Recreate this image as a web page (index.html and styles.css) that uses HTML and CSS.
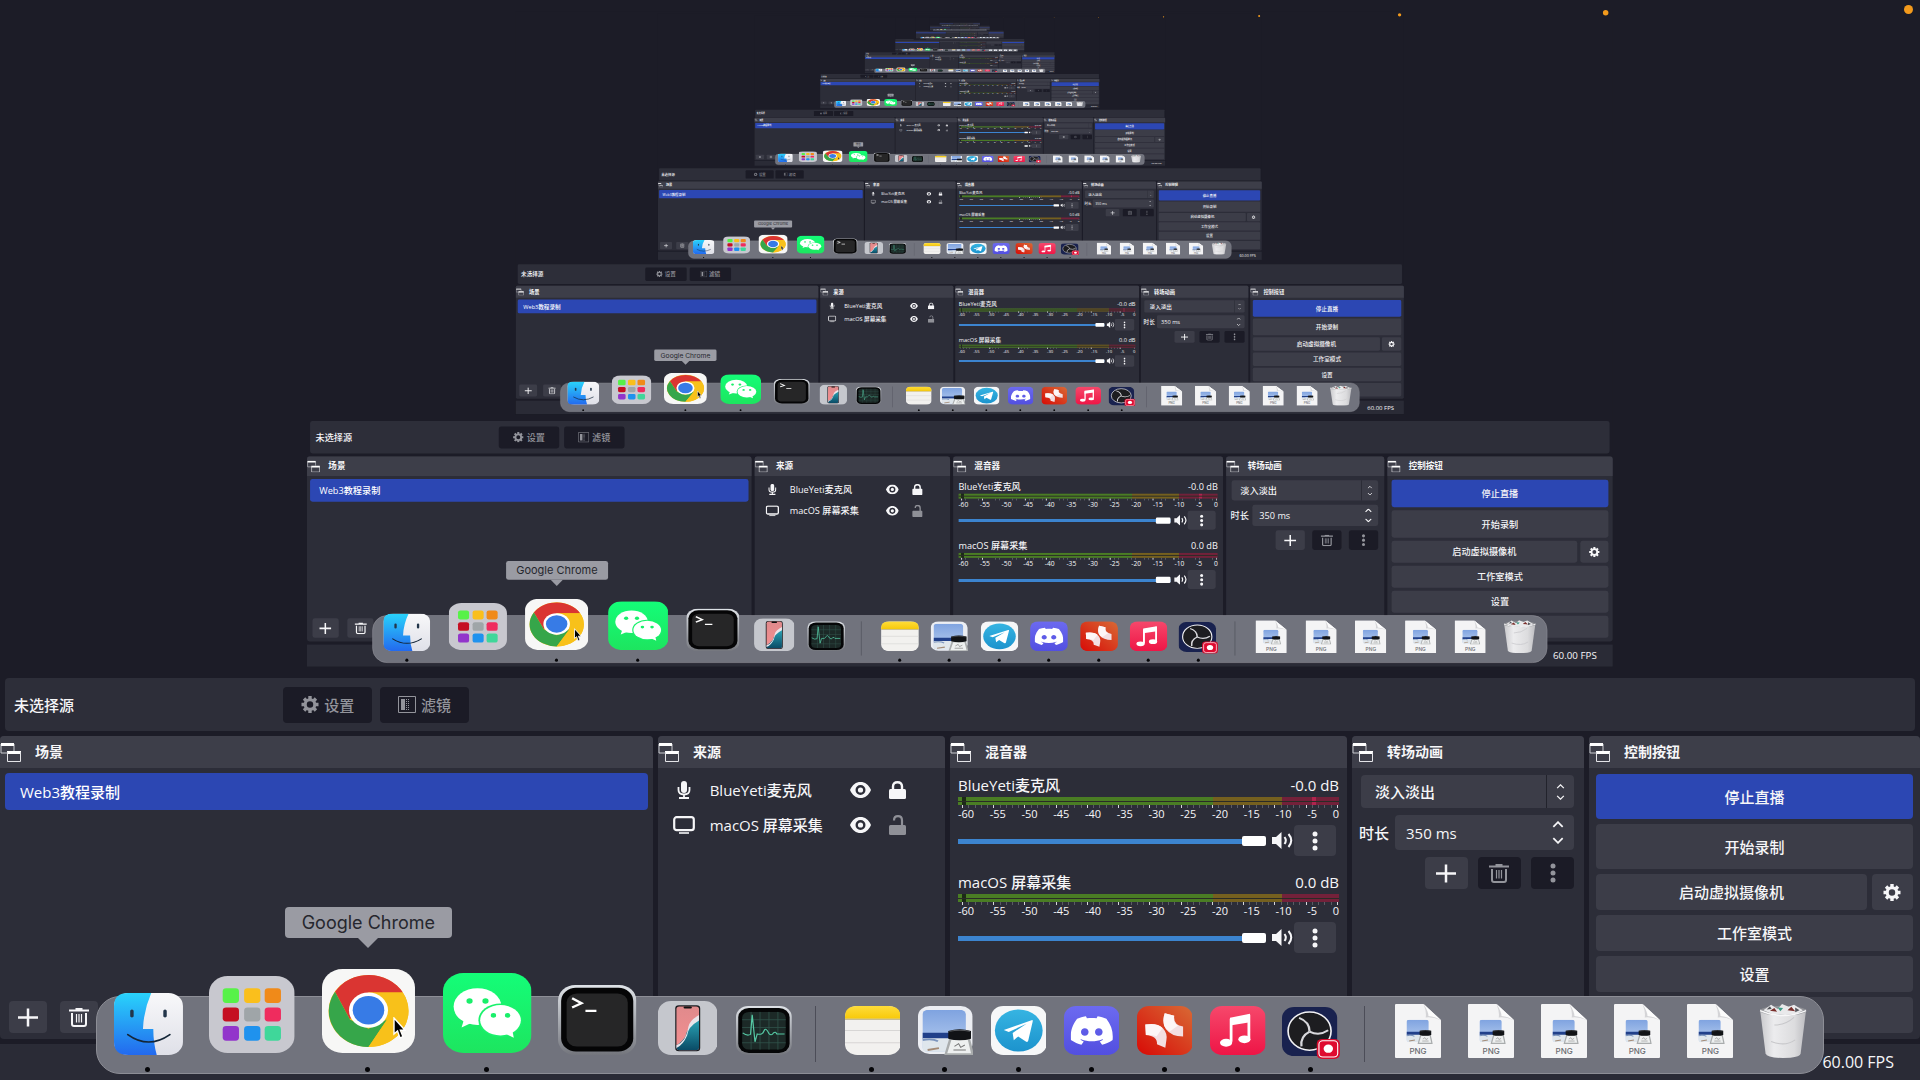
FILE: index.html
```
<!DOCTYPE html>
<html lang="zh-CN">
<head>
    <meta charset="UTF-8">
    <meta name="viewport" content="width=device-width, initial-scale=1.0">
    <title>OBS Studio</title>
    <link rel="stylesheet" href="styles.css">
</head>
<body>
    <!-- Icons -->
    <svg class="sprite" width="0" height="0" aria-hidden="true">
        <defs>
            <linearGradient id="gBlue" x1="0" y1="0" x2="0" y2="1"><stop offset="0" stop-color="#29d3fb"/><stop offset="1" stop-color="#2369ee"/></linearGradient>
            <linearGradient id="gWhite" x1="0" y1="0" x2="0" y2="1"><stop offset="0" stop-color="#f8f8fa"/><stop offset="1" stop-color="#dfe0e8"/></linearGradient>
            <linearGradient id="gGreen" x1="0" y1="0" x2="0" y2="1"><stop offset="0" stop-color="#14fd78"/><stop offset="1" stop-color="#1de55f"/></linearGradient>
            <linearGradient id="gSilver" x1="0" y1="0" x2="0" y2="1"><stop offset="0" stop-color="#dfe3e8"/><stop offset="1" stop-color="#74767d"/></linearGradient>
            <linearGradient id="gTele" x1="0" y1="0" x2="0" y2="1"><stop offset="0" stop-color="#36b4e2"/><stop offset="1" stop-color="#1c93cd"/></linearGradient>
            <linearGradient id="gDiscord" x1="0" y1="0" x2="0" y2="1"><stop offset="0" stop-color="#6c6af0"/><stop offset="1" stop-color="#524fe0"/></linearGradient>
            <linearGradient id="gXmind" x1="1" y1="0" x2="0" y2="1"><stop offset="0" stop-color="#d86a35"/><stop offset="1" stop-color="#d80a06"/></linearGradient>
            <linearGradient id="gMusic" x1="0" y1="0" x2="0" y2="1"><stop offset="0" stop-color="#f6486b"/><stop offset="1" stop-color="#ee1546"/></linearGradient>
            <linearGradient id="gSky" x1="0" y1="0" x2="0" y2="1"><stop offset="0" stop-color="#7fa3e0"/><stop offset="1" stop-color="#b9cff0"/></linearGradient>
            <linearGradient id="gNote" x1="0" y1="0" x2="0" y2="1"><stop offset="0" stop-color="#fedc3a"/><stop offset="1" stop-color="#f7c90a"/></linearGradient>
            <linearGradient id="gPink" x1="0" y1="0" x2="0" y2="1"><stop offset="0" stop-color="#e08a8c"/><stop offset="1" stop-color="#f58f90"/></linearGradient>
            <linearGradient id="gSea" x1="0" y1="0" x2="0" y2="1"><stop offset="0" stop-color="#2ba7b8"/><stop offset="1" stop-color="#0a4b66"/></linearGradient>
            <linearGradient id="gBin" x1="0" y1="0" x2="1" y2="0"><stop offset="0" stop-color="#c9c9cc"/><stop offset=".3" stop-color="#ececee"/><stop offset=".75" stop-color="#dcdcde"/><stop offset="1" stop-color="#bcbcc0"/></linearGradient>
        </defs>

        <symbol id="i-windows" viewBox="0 0 22 19">
            <path d="M1 10V1h13v7" fill="none" stroke="#c9cad0"/><path d="M1 0h13v3H1zM7 8h14v3H7z" fill="#fff"/><path d="M1 10h6" stroke="#c9cad0"/><path d="M7.500 9v9.500h13V9" fill="none" stroke="#e4e4e8"/>
        </symbol>
        <symbol id="i-gear" viewBox="0 0 20 20">
            <circle cx="10" cy="10" r="5.600" fill="none" stroke="currentColor" stroke-width="3.600"/>
            <path d="M10 0v4M10 16v4M0 10h4M16 10h4M3 3l2.800 2.800M14.200 14.200 17 17M3 17l2.800-2.800M14.200 5.800 17 3" stroke="currentColor" stroke-width="4"/>
        </symbol>
        <symbol id="i-filter" viewBox="0 0 18 17">
            <path d="M.5.5h17v16H.5z" fill="none" stroke="currentColor"/><path d="M3 3h4v11H3z" fill="currentColor"/><path d="M8.500 3v11M10.500 3v11" stroke="currentColor" stroke-dasharray="1 1"/>
        </symbol>
        <symbol id="i-plus" viewBox="0 0 20 18"><path d="M10 0v18M0 9h20" stroke="currentColor" stroke-width="2.500"/></symbol>
        <symbol id="i-trash" viewBox="0 0 20 19">
            <path d="M0 2.500h20M6.500 1h7" stroke="currentColor" stroke-width="2"/><path d="M3 5v11q0 2 2 2h10q2 0 2-2V5" fill="none" stroke="currentColor" stroke-width="2"/><path d="M7.500 6v8.500M10 6v8.500M12.500 6v8.500" stroke="currentColor" stroke-width="1.200"/>
        </symbol>
        <symbol id="i-dots" viewBox="0 0 6 20"><circle cx="3" cy="3" r="2.500" fill="currentColor"/><circle cx="3" cy="10" r="2.500" fill="currentColor"/><circle cx="3" cy="17" r="2.500" fill="currentColor"/></symbol>
        <symbol id="i-mic" viewBox="0 0 14 18">
            <rect x="4" y="0" width="6" height="12" rx="3" fill="currentColor"/><path d="M1.500 6v3q0 4.500 5.500 4.500T12.500 9V6M7 13v4M2 17h10" fill="none" stroke="currentColor" stroke-width="1.800"/>
        </symbol>
        <symbol id="i-screen" viewBox="0 0 22 18"><rect x="1.200" y="1.200" width="19.600" height="13" rx="2.500" fill="none" stroke="currentColor" stroke-width="2.200"/><path d="M6 17h10" stroke="currentColor" stroke-width="1.600"/></symbol>
        <symbol id="i-eye" viewBox="0 0 21 16">
            <path fill-rule="evenodd" fill="currentColor" d="M0 8C2.500 2.500 6 0 10.500 0S18.500 2.500 21 8c-2.500 5.500-6 8-10.500 8S2.500 13.500 0 8zm10.500-5a5 5 0 1 0 0 10 5 5 0 0 0 0-10z"/><circle cx="10.500" cy="8" r="2.600" fill="currentColor"/>
        </symbol>
        <symbol id="i-lock" viewBox="0 0 17 18"><rect x="0" y="8" width="17" height="10" rx="1.500" fill="currentColor"/><path d="M4 9V5.500Q4 1.200 8.500 1.200T13 5.500V9" fill="none" stroke="currentColor" stroke-width="2.400"/></symbol>
        <symbol id="i-unlock" viewBox="0 0 17 20"><rect x="0" y="10" width="17" height="10" rx="1.500" fill="currentColor"/><path d="M5 5.500Q5 1.200 9 1.200T13 5.500V11" fill="none" stroke="currentColor" stroke-width="2.200"/></symbol>
        <symbol id="i-speaker" viewBox="0 0 22 17">
            <path d="M0 5h4l5.500-5v17L4 12H0z" fill="currentColor"/><path d="M12.500 5q2.600 3.500 0 7M16.500 2q5.500 6.500 0 13" fill="none" stroke="currentColor" stroke-width="2"/>
        </symbol>
        <symbol id="i-up" viewBox="0 0 10 6"><path d="M1 5l4-4 4 4" fill="none" stroke="currentColor" stroke-width="1.500"/></symbol>
        <symbol id="i-down" viewBox="0 0 10 6"><path d="M1 1l4 4 4-4" fill="none" stroke="currentColor" stroke-width="1.500"/></symbol>
        <symbol id="i-cursor" viewBox="0 0 13 22"><path d="M1 1v16l3.500-3 2.500 7 3-1.300-2.600-6.500H12z" fill="#000" stroke="#fff" stroke-width="1.400"/></symbol>

        <!-- Dock apps -->
        <symbol id="a-finder" viewBox="0 0 100 100" preserveAspectRatio="none">
            <rect width="100" height="100" rx="21" fill="url(#gWhite)"/>
            <path d="M21 0h33Q43 28 42 58h15q0 22 5 42H21Q0 100 0 79V21Q0 0 21 0z" fill="url(#gBlue)"/>
            <path d="M26 29v8M74 29v8" stroke="#23364a" stroke-width="5" stroke-linecap="round"/>
            <path d="M20 67q30 24 61 0" fill="none" stroke="#142638" stroke-width="2.500" stroke-linecap="round"/>
        </symbol>
        <symbol id="a-launchpad" viewBox="0 0 100 100" preserveAspectRatio="none">
            <rect width="100" height="100" rx="22" fill="#c8c8cf"/>
            <rect x="16" y="16" width="19" height="19" rx="4" fill="#57f248"/><rect x="41" y="16" width="19" height="19" rx="4" fill="#fabf1c"/><rect x="65" y="16" width="19" height="19" rx="4" fill="#f08a19"/>
            <rect x="16" y="41" width="19" height="18" rx="4" fill="#c50f22"/><rect x="41" y="41" width="19" height="18" rx="4" fill="#9fa5a8"/><rect x="65" y="41" width="19" height="18" rx="4" fill="#ef2c5e"/>
            <rect x="16" y="65" width="19" height="19" rx="4" fill="#9235cb"/><rect x="41" y="65" width="19" height="19" rx="4" fill="#1f92ee"/><rect x="65" y="65" width="19" height="19" rx="4" fill="#3fd79a"/>
        </symbol>
        <symbol id="a-chrome" viewBox="0 0 100 100" preserveAspectRatio="none">
            <rect width="100" height="100" rx="22" fill="#f7f7f6"/>
            <circle cx="50" cy="50" r="43" fill="#f8c11a"/>
            <path d="M14 27A43 43 0 0 1 87 28H50L30 60z" fill="#da3532"/>
            <path d="M14 27A43 43 0 0 0 50 93L70 60 50 71 30 60z" fill="#36a64a"/>
            <path d="M50 28h37A43 43 0 0 1 50 93l20-33z" fill="#f8c11a"/>
            <circle cx="50" cy="49" r="21" fill="#fff"/><circle cx="50" cy="49" r="17" fill="#377be6"/>
        </symbol>
        <symbol id="a-wechat" viewBox="0 0 100 100" preserveAspectRatio="none">
            <rect width="100" height="100" rx="23" fill="url(#gGreen)"/>
            <path d="M24 57l-3 11 12-6z" fill="#fff"/><ellipse cx="39" cy="42" rx="27" ry="23" fill="#fff"/>
            <ellipse cx="65" cy="59" rx="25" ry="21" fill="#1af26c"/>
            <path d="M71 76l9 5-2-11z" fill="#fff"/><ellipse cx="65" cy="59" rx="23" ry="19" fill="#fff"/>
            <circle cx="30" cy="35" r="3.500" fill="#19ef6a"/><circle cx="48" cy="35" r="3.500" fill="#19ef6a"/><circle cx="57" cy="53" r="3" fill="#19ef6a"/><circle cx="73" cy="53" r="3" fill="#19ef6a"/>
        </symbol>
        <symbol id="a-terminal" viewBox="0 0 100 100" preserveAspectRatio="none">
            <rect width="100" height="100" rx="22" fill="url(#gSilver)"/><rect x="4" y="4" width="92" height="91" rx="19" fill="#050506"/><rect x="11" y="12" width="78" height="76" rx="13" fill="#262627"/>
            <path d="M18 19l12 7-12 6M35 37h14" fill="none" stroke="#fff" stroke-width="3.200"/>
        </symbol>
        <symbol id="a-phone" viewBox="0 0 100 100" preserveAspectRatio="none">
            <rect width="100" height="100" rx="22" fill="#c5c7cd"/>
            <rect x="29" y="8" width="42" height="85" rx="6" fill="#191c20"/><rect x="31" y="10" width="38" height="81" rx="5" fill="url(#gPink)"/>
            <path d="M69 33Q48 50 46 66 38 78 31 82v4q0 5 5 5h28q5 0 5-5z" fill="url(#gSea)"/>
            <path d="M31 82q17-8 20-34 2-12 18-22v10Q50 48 49 64 42 82 31 87z" fill="#e9e5ea"/><rect x="43" y="10" width="14" height="4" rx="2" fill="#111"/>
        </symbol>
        <symbol id="a-activity" viewBox="0 0 100 100" preserveAspectRatio="none">
            <rect width="100" height="100" rx="22" fill="url(#gSilver)"/><rect x="4" y="4" width="92" height="92" rx="19" fill="#050607"/><rect x="11" y="12" width="78" height="77" rx="12" fill="#1c2927"/>
            <path d="M27 12v77M43 12v77M59 12v77M75 12v77M11 28h78M11 44h78M11 75h78" stroke="#31544b" stroke-width="1.500"/>
            <path d="M12 55q8 7 14 3l3-40 5 55 4-16q9 3 12-6t9 5q4 6 8-1 4-4 6 2h14" fill="none" stroke="#55c9a4" stroke-width="2.200"/>
        </symbol>
        <symbol id="a-notes" viewBox="0 0 100 100" preserveAspectRatio="none">
            <rect width="100" height="100" rx="22" fill="#f2f1ef"/><path d="M0 26V22Q0 0 22 0h56q22 0 22 22v4z" fill="url(#gNote)"/>
            <path d="M0 27h100" stroke="#b9aa70" stroke-width="2"/><path d="M0 50h100M0 75h100" stroke="#cfcecd" stroke-width="1.500"/>
        </symbol>
        <symbol id="p-photo" viewBox="0 0 100 100" preserveAspectRatio="none">
            <rect width="84" height="92" rx="10" fill="url(#gSky)"/><path d="M0 50h84v14H0z" fill="#21408a"/><path d="M0 62h84v20q0 10-10 10H10Q0 92 0 82z" fill="#dfe6ec"/><path d="M0 66q20-4 30 3" fill="none" stroke="#7b94bd" stroke-width="4"/><path d="M10 88l22-4" fill="none" stroke="#a38a76" stroke-width="4"/>
            <path d="M52 62h40l8 38H42z" fill="#a9acad"/><path d="M56 66h32l6 29H48z" fill="#eef0f0"/><path d="M62 80l8-6 4 8 8-5M60 88h24" fill="none" stroke="#777" stroke-width="2"/>
            <path d="M50 46q22-7 44 0v17q-22 7-44 0z" fill="#111316"/><path d="M52 47q20-5 40 0" stroke="#55585c" stroke-width="2" fill="none"/>
        </symbol>
        <symbol id="a-preview" viewBox="0 0 100 100" preserveAspectRatio="none">
            <rect width="98" height="98" rx="21" fill="#eceef3"/><use href="#p-photo" x="8" y="8" width="93" height="93"/>
        </symbol>
        <symbol id="a-telegram" viewBox="0 0 100 100" preserveAspectRatio="none">
            <rect width="100" height="100" rx="22" fill="#f6f7f8"/><circle cx="50" cy="50" r="43" fill="url(#gTele)"/>
            <path d="M23 49 73 29q3-1 2 3L67 71q-1 4-5 1L49 62l-8 8-2-15 25-19-32 17z" fill="#fff"/>
        </symbol>
        <symbol id="a-discord" viewBox="0 0 100 100" preserveAspectRatio="none">
            <rect width="100" height="100" rx="22" fill="url(#gDiscord)"/>
            <svg x="12" y="12" width="76" height="76" viewBox="0 0 24 24"><path fill="#fff" d="M20.317 4.370a19.791 19.791 0 0 0-4.885-1.515.074.074 0 0 0-.079.037c-.211.375-.445.865-.608 1.250-1.845-.276-3.680-.276-5.487 0-.164-.393-.406-.874-.618-1.250a.077.077 0 0 0-.079-.037 19.736 19.736 0 0 0-4.885 1.515C.533 9.046-.319 13.580.099 18.058c2.053 1.508 4.041 2.423 6.024 3.085.546-.658.957-1.323 1.310-2.022l-1.913-1.106.364-.419c4.006 1.783 8.258 1.783 12.139 0l.445.420-1.914 1.126c.360.698.772 1.363 1.309 2.022 1.961-.607 3.950-1.522 6.034-3.085.500-5.177-.838-9.674-3.580-13.709zM8.020 15.331c-1.183 0-2.157-1.086-2.157-2.419s.956-2.419 2.157-2.419c1.211 0 2.176 1.095 2.157 2.419 0 1.333-.956 2.419-2.157 2.419zm7.975 0c-1.183 0-2.157-1.086-2.157-2.419s.955-2.419 2.157-2.419c1.211 0 2.176 1.095 2.157 2.419 0 1.333-.946 2.419-2.157 2.419z"/></svg>
        </symbol>
        <symbol id="a-xmind" viewBox="0 0 100 100" preserveAspectRatio="none">
            <rect width="100" height="100" rx="22" fill="url(#gXmind)"/>
            <path d="M50 15l17 5q-2 19 16 22v20q-22 0-31-15-8-14-2-32z" fill="#f3dfe2"/><path d="M67 20q-3 15 7 20l-15 12q-7-3-10-11-3-12 1-26z" fill="#fdf6f6"/>
            <path d="M15 38q22-4 32 8 8 10 6 23l-2 16-15-7q1-17-20-19z" fill="#f3dfe2"/><path d="M15 38q22-4 31 7L35 62q-6-3-19-3z" fill="#fdf6f6"/>
        </symbol>
        <symbol id="a-music" viewBox="0 0 100 100" preserveAspectRatio="none">
            <rect width="100" height="100" rx="22" fill="url(#gMusic)"/>
            <path d="M36 24l36-8v17l-36 7z" fill="#fff"/><path d="M38 26v47M70 18v48" stroke="#fff" stroke-width="5"/><ellipse cx="29" cy="75" rx="11" ry="8" fill="#fff"/><ellipse cx="62" cy="68" rx="11" ry="8" fill="#fff"/>
        </symbol>
        <symbol id="a-obs" viewBox="0 0 106 106" preserveAspectRatio="none">
            <rect width="100" height="100" rx="22" fill="#19224f"/><circle cx="50" cy="49" r="39" fill="#1d1d20" stroke="#f2f2f4" stroke-width="3"/>
            <g fill="none" stroke="#d8d8dc" stroke-width="4"><path d="M50 50Q50 30 31 22"/><path d="M50 50Q50 30 31 22" transform="rotate(120 50 50)"/><path d="M50 50Q50 30 31 22" transform="rotate(240 50 50)"/></g>
            <rect x="63" y="65" width="42" height="41" rx="10" fill="#d50a2c"/><rect x="67" y="69" width="34" height="33" rx="7" fill="#df0a2f" stroke="#fff" stroke-width="2"/><circle cx="84" cy="85" r="8.500" fill="#fff"/>
        </symbol>
        <symbol id="a-png" viewBox="0 0 84 100" preserveAspectRatio="none">
            <path d="M0 2q0-2 2-2h50l32 30v68q0 2-2 2H2q-2 0-2-2z" fill="#f4f4f5"/><path d="M52 0q6 15 4 25 12-2 28 5z" fill="#d4d4d7"/><path d="M52 0q9 14 9 22 12 1 23 8z" fill="#fcfcfc"/>
            <use href="#p-photo" x="21" y="29" width="48" height="45"/>
        </symbol>
        <symbol id="a-bin" viewBox="0 0 88 100" preserveAspectRatio="none">
            <path d="M2 12l10 80q2 8 32 8t32-8l10-80z" fill="url(#gBin)"/><ellipse cx="44" cy="14" rx="42" ry="9" fill="#8f9095"/>
            <path d="M8 13l14-10 12 8 8-9 12 5 10-4 16 10-12 7-20 2-22-1z" fill="#e9e9eb"/><path d="M20 14l8-5 5 7zM52 13l7-6 7 8z" fill="#7a2f2c"/><path d="M34 8l10 1-5 6z" fill="#3c9b86"/><path d="M14 12l6-6 3 5zM66 8l8 5-8 4z" fill="#55575d"/>
            <path d="M2 14q42 18 84 0" fill="none" stroke="#f7f7f8" stroke-width="2.500"/><path d="M28 40q20 0 36-14M22 70q26 10 44-3" fill="none" stroke="#c7c7ca" stroke-width="2"/>
        </symbol>
    </svg>

    <div class="screen">
        <span class="rec-dot"></span>

        <main class="preview"></main>

        <section class="source-bar">
            <span class="source-name">未选择源</span>
            <button class="btn btn-off" disabled><svg class="ic-gear"><use href="#i-gear"/></svg>设置</button>
            <button class="btn btn-off" disabled><svg class="ic-filter"><use href="#i-filter"/></svg>滤镜</button>
        </section>

        <div class="panels">
            <section class="panel">
                <h2><svg class="ic-win"><use href="#i-windows"/></svg>场景</h2>
                <div class="scenes">
                    <a class="scene" href="#">Web3教程录制</a>
                    <div class="scene-tools">
                        <button class="btn tool" aria-label="添加场景"><svg class="ic-tool"><use href="#i-plus"/></svg></button>
                        <button class="btn tool" aria-label="删除场景"><svg class="ic-tool"><use href="#i-trash"/></svg></button>
                    </div>
                </div>
            </section>

            <section class="panel">
                <h2><svg class="ic-win"><use href="#i-windows"/></svg>来源</h2>
                <ul class="sources">
                    <li>
                        <svg class="ic-mic"><use href="#i-mic"/></svg>
                        <span class="source-label">BlueYeti麦克风</span>
                        <button class="plain" aria-label="显示"><svg class="ic-eye"><use href="#i-eye"/></svg></button>
                        <button class="plain" aria-label="锁定"><svg class="ic-lock"><use href="#i-lock"/></svg></button>
                    </li>
                    <li>
                        <svg class="ic-screen"><use href="#i-screen"/></svg>
                        <span class="source-label">macOS 屏幕采集</span>
                        <button class="plain" aria-label="显示"><svg class="ic-eye"><use href="#i-eye"/></svg></button>
                        <button class="plain dim" aria-label="锁定"><svg class="ic-unlock"><use href="#i-unlock"/></svg></button>
                    </li>
                </ul>
            </section>

            <section class="panel">
                <h2><svg class="ic-win"><use href="#i-windows"/></svg>混音器</h2>
                <div class="mixer">
                    <div class="channel">
                        <div class="channel-head"><span>BlueYeti麦克风</span><span>-0.0 dB</span></div>
                        <div class="meter peak"></div>
                        <div class="ticks"></div>
                        <div class="scale"><span>-60</span><span>-55</span><span>-50</span><span>-45</span><span>-40</span><span>-35</span><span>-30</span><span>-25</span><span>-20</span><span>-15</span><span>-10</span><span>-5</span><span>0</span></div>
                        <div class="volume">
                            <input type="range" min="0" max="100" value="100" aria-label="BlueYeti麦克风 音量">
                            <button class="plain" aria-label="静音"><svg class="ic-speaker"><use href="#i-speaker"/></svg></button>
                            <button class="btn more" aria-label="更多"><svg class="ic-dots"><use href="#i-dots"/></svg></button>
                        </div>
                    </div>
                    <div class="channel">
                        <div class="channel-head"><span>macOS 屏幕采集</span><span>0.0 dB</span></div>
                        <div class="meter"></div>
                        <div class="ticks"></div>
                        <div class="scale"><span>-60</span><span>-55</span><span>-50</span><span>-45</span><span>-40</span><span>-35</span><span>-30</span><span>-25</span><span>-20</span><span>-15</span><span>-10</span><span>-5</span><span>0</span></div>
                        <div class="volume">
                            <input type="range" min="0" max="100" value="100" aria-label="macOS 屏幕采集 音量">
                            <button class="plain" aria-label="静音"><svg class="ic-speaker"><use href="#i-speaker"/></svg></button>
                            <button class="btn more" aria-label="更多"><svg class="ic-dots"><use href="#i-dots"/></svg></button>
                        </div>
                    </div>
                </div>
            </section>

            <section class="panel">
                <h2><svg class="ic-win"><use href="#i-windows"/></svg>转场动画</h2>
                <div class="transitions">
                    <div class="select-wrap">
                        <select aria-label="转场动画"><option>淡入淡出</option></select>
                        <span class="arrows"><svg><use href="#i-up"/></svg><svg><use href="#i-down"/></svg></span>
                    </div>
                    <label class="duration">时长
                        <span class="spin">
                            <input type="text" value="350 ms">
                            <span class="arrows big"><svg><use href="#i-up"/></svg><svg><use href="#i-down"/></svg></span>
                        </span>
                    </label>
                    <div class="transition-tools">
                        <button class="btn tool" aria-label="添加"><svg class="ic-tool"><use href="#i-plus"/></svg></button>
                        <button class="btn tool btn-off" aria-label="删除" disabled><svg class="ic-tool"><use href="#i-trash"/></svg></button>
                        <button class="btn tool btn-off" aria-label="更多" disabled><svg class="ic-dots"><use href="#i-dots"/></svg></button>
                    </div>
                </div>
            </section>

            <section class="panel">
                <h2><svg class="ic-win"><use href="#i-windows"/></svg>控制按钮</h2>
                <div class="controls">
                    <button class="btn tall active">停止直播</button>
                    <button class="btn tall">开始录制</button>
                    <div class="camera">
                        <button class="btn">启动虚拟摄像机</button>
                        <button class="btn" aria-label="虚拟摄像机设置"><svg class="ic-gear"><use href="#i-gear"/></svg></button>
                    </div>
                    <button class="btn">工作室模式</button>
                    <button class="btn">设置</button>
                    <button class="btn" aria-label="退出"></button>
                </div>
            </section>
        </div>

        <footer class="status">60.00 FPS</footer>

        <nav class="dock">
            <div class="app finder open"><svg><use href="#a-finder"/></svg></div>
            <div class="app launchpad"><svg><use href="#a-launchpad"/></svg></div>
            <div class="app chrome open">
                <span class="tip">Google Chrome</span>
                <svg><use href="#a-chrome"/></svg>
                <svg class="cursor"><use href="#i-cursor"/></svg>
            </div>
            <div class="app wechat open"><svg><use href="#a-wechat"/></svg></div>
            <div class="app terminal"><svg><use href="#a-terminal"/></svg></div>
            <div class="app phone"><svg><use href="#a-phone"/></svg></div>
            <div class="app activity"><svg><use href="#a-activity"/></svg></div>
            <div class="line"></div>
            <div class="app open"><svg><use href="#a-notes"/></svg></div>
            <div class="app open"><svg><use href="#a-preview"/></svg></div>
            <div class="app open"><svg><use href="#a-telegram"/></svg></div>
            <div class="app open"><svg><use href="#a-discord"/></svg></div>
            <div class="app open"><svg><use href="#a-xmind"/></svg></div>
            <div class="app open"><svg><use href="#a-music"/></svg></div>
            <div class="app obs open"><svg><use href="#a-obs"/></svg></div>
            <div class="line"></div>
            <div class="app file"><svg><use href="#a-png"/></svg><span>PNG</span></div>
            <div class="app file"><svg><use href="#a-png"/></svg><span>PNG</span></div>
            <div class="app file"><svg><use href="#a-png"/></svg><span>PNG</span></div>
            <div class="app file"><svg><use href="#a-png"/></svg><span>PNG</span></div>
            <div class="app file"><svg><use href="#a-png"/></svg><span>PNG</span></div>
            <div class="app bin"><svg><use href="#a-bin"/></svg></div>
        </nav>
    </div>

    <script>
        // The preview shows the captured screen, which shows the preview again
        const DEPTH = 10;
        const original = document.querySelector('.screen').cloneNode(true);
        let parent = document.querySelector('.preview');

        for (let level = 1; level <= DEPTH; level++) {
            const copy = original.cloneNode(true);
            copy.classList.add('capture');
            copy.inert = true;

            // the older frames still have the pointer over WeChat
            if (level >= 4) {
                const tip = copy.querySelector('.tip');
                tip.textContent = '微信';
                copy.querySelector('.wechat').prepend(tip);
            }

            // less than half a pixel high from here on, no need for the labels
            if (level >= 7) {
                const walker = document.createTreeWalker(copy, NodeFilter.SHOW_TEXT);
                while (walker.nextNode()) {
                    walker.currentNode.nodeValue = '';
                }
            }

            parent.appendChild(copy);
            parent = copy.querySelector('.preview');
        }
    </script>
</body>
</html>
```

FILE: styles.css
```
* {
    box-sizing: border-box;
}

body {
    margin: 0;
    overflow: hidden;
    background: #1c1c27;
    color: #f6f6f8;
    font-family: "Open Sans", "Noto Sans CJK SC", sans-serif;
    font-size: 15px;
    font-weight: 500;
    line-height: 20px;
}

button, input, select {
    font: inherit;
    color: inherit;
    border: 0;
    margin: 0;
    padding: 0;
}

svg {
    display: block;
    flex: none;
}

.sprite {
    position: absolute;
}

.screen {
    position: relative;
    display: flex;
    flex-direction: column;
    height: 100vh;
    background: #1c1c27;
}

.rec-dot {
    position: absolute;
    top: 5px;
    right: 7px;
    width: 9px;
    height: 9px;
    border-radius: 50%;
    background: #f39a1c;
}

.preview {
    position: relative;
    flex: 1;
    min-height: 0;
}

/* the captured screen inside the preview canvas */
.capture {
    position: absolute;
    top: 7px;
    left: 16%;
    width: 111.35%;
    transform: scale(0.6107);
    transform-origin: 0 0;
}

.source-bar {
    display: grid;
    grid-template-columns: 262fr 89fr 89fr 1442fr;
    align-items: center;
    gap: 8px;
    height: 53px;
    margin: 0 5px 5px;
    padding-left: 9px;
    border-radius: 4px;
    background: #2d2e39;
}

.btn {
    display: flex;
    align-items: center;
    justify-content: center;
    height: 36px;
    border-radius: 4px;
    background: #3c3d48;
}

.btn-off {
    background: #1b1b26;
    color: #93949b;
}

.source-bar .btn {
    gap: 5px;
}

.ic-gear { width: 18px; height: 17px; }
.ic-filter { width: 18px; height: 17px; }
.ic-win { width: 22px; height: 19px; }
.ic-tool { width: 20px; height: 19px; }
.ic-dots { width: 6px; height: 20px; }
.ic-mic { width: 14px; height: 18px; }
.ic-screen { width: 22px; height: 18px; }
.ic-eye { width: 21px; height: 16px; }
.ic-lock { width: 17px; height: 18px; }
.ic-unlock { width: 17px; height: 20px; }
.ic-speaker { width: 22px; height: 17px; }

.panels {
    display: grid;
    grid-template-columns: 653fr 287fr 397fr 232fr 331fr;
    gap: 5px;
    height: 303px;
}

.panel {
    display: flex;
    flex-direction: column;
    min-width: 0;
    border-radius: 4px;
    background: #2c2d38;
}

.panel h2 {
    display: flex;
    align-items: center;
    gap: 13px;
    height: 32px;
    margin: 0;
    border-radius: 4px 4px 0 0;
    background: #3d3e49;
    font-size: 14px;
    font-weight: bold;
}

/* scenes */
.scenes {
    display: flex;
    flex: 1;
    flex-direction: column;
    justify-content: space-between;
    padding: 5px 5px 6px;
}

.scene {
    display: flex;
    align-items: center;
    height: 37px;
    padding-left: 15px;
    border-radius: 4px;
    background: #2c47b3;
    color: #fff;
    text-decoration: none;
}

.scene-tools {
    display: flex;
    gap: 2%;
    padding-left: 4px;
}

.tool {
    width: 42px;
    height: 32px;
}

.scene-tools .tool {
    width: 6%;
}

/* sources */
.sources {
    margin: 0;
    padding: 4px 0 0;
    list-style: none;
}

.sources li {
    display: grid;
    grid-template-columns: 18% 46% 13% 13%;
    align-items: center;
    justify-items: center;
    height: 35px;
}

.source-label {
    justify-self: start;
    white-space: nowrap;
}

.plain {
    display: flex;
    align-items: center;
    background: none;
}

.dim {
    color: #8f9097;
}

/* mixer */
.mixer {
    display: flex;
    flex-direction: column;
    gap: 16px;
    padding: 7px 2% 0;
}

.channel-head {
    display: flex;
    justify-content: space-between;
    height: 20px;
    margin-bottom: 2px;
}

.meter {
    height: 8px;
    background:
        linear-gradient(transparent 4px, #2a2b26 4px, #2a2b26 5px, transparent 5px),
        linear-gradient(90deg, #4a7d24 1%, #1c2a16 1%, #1c2a16 2%, #4a7d24 2%, #4a7d24 67%, #75601f 67%, #75601f 85%, #73213a 85%);
}

.meter.peak {
    background:
        linear-gradient(transparent 4px, #2a2b26 4px, #2a2b26 5px, transparent 5px),
        linear-gradient(90deg, #4a7d24 1%, #1c2a16 1%, #1c2a16 2%, #4a7d24 2%, #4a7d24 67%, #75601f 67%, #75601f 85%, #73213a 85%, #73213a 93%, #b0244e 93%, #b0244e 94%, #73213a 94%);
}

.ticks {
    height: 3px;
    margin: 0 1px 0 4px;
    border-right: 1px solid #d5d5da;
    background:
        repeating-linear-gradient(90deg, #d5d5da 0, #d5d5da 1px, transparent 1px, transparent calc(100% / 12)),
        repeating-linear-gradient(90deg, #5a5b64 0, #5a5b64 1px, transparent 1px, transparent calc(100% / 60));
}

.scale {
    display: flex;
    justify-content: space-between;
    height: 12px;
    margin-bottom: 5px;
    font-size: 11px;
    line-height: 12px;
}

.volume {
    display: flex;
    align-items: center;
    height: 31px;
}

.volume input {
    flex: 1;
    min-width: 0;
    height: 12px;
    margin-right: 6px;
    appearance: none;
    background: linear-gradient(transparent 4px, #3c84cf 4px, #3c84cf 9px, transparent 9px);
}

.volume input::-webkit-slider-thumb {
    appearance: none;
    width: 24px;
    height: 10px;
    border-radius: 2px;
    background: #fff;
}

.more {
    width: 11%;
    height: 31px;
    margin-right: 3px;
}

/* transitions */
.transitions {
    display: flex;
    flex-direction: column;
    gap: 7px;
    padding: 7px 10px 0 9px;
}

.select-wrap, .spin {
    display: flex;
    border-radius: 4px;
    background: #3c3d48;
}

.select-wrap {
    height: 33px;
}

.select-wrap select {
    flex: 1;
    padding-left: 14px;
    appearance: none;
    background: none;
    border-right: 1px solid #22232c;
}

.arrows {
    display: flex;
    flex-direction: column;
    align-items: center;
    justify-content: center;
    gap: 6px;
    width: 27px;
}

.arrows svg {
    width: 9px;
    height: 5px;
}

.arrows.big {
    gap: 9px;
    width: 32px;
}

.arrows.big svg {
    width: 12px;
    height: 7px;
}

.duration {
    display: flex;
    align-items: center;
    gap: 6px;
    margin-left: -2px;
    white-space: nowrap;
}

.spin {
    flex: 1;
    height: 35px;
}

.spin input {
    flex: 1;
    width: 0;
    padding-left: 11px;
    background: none;
}

.transition-tools {
    display: flex;
    justify-content: flex-end;
    gap: 5%;
}

.transition-tools .tool {
    width: 20%;
}

/* controls */
.controls {
    display: flex;
    flex-direction: column;
    gap: 5px;
    padding: 6px 7px 0;
}

.tall {
    height: 45px;
}

.active {
    background: #2c47b3;
}

.camera {
    display: flex;
    gap: 5px;
}

.camera .btn:first-child {
    flex: 1;
}

.camera .btn:last-child {
    width: 13%;
}

.status {
    height: 36px;
    margin-top: 5px;
    padding: 8px 26px 0 0;
    background: #2a2b36;
    font-size: 16px;
    text-align: right;
}

/* dock */
.dock {
    position: absolute;
    right: 5%;
    bottom: 6px;
    left: 5%;
    display: grid;
    grid-template-rows: 100%;
    grid-template-columns: 84fr 124fr 108fr 130fr 90fr 90fr 62fr 41fr repeat(7, 73fr) 34fr repeat(6, 73fr);
    align-items: end;
    height: 78px;
    padding: 0 3px 18px 9px;
    border: 1px solid #8d8e96;
    border-radius: 24px;
    background: #71737d;
}

.app {
    position: relative;
    display: flex;
    justify-content: center;
}

.app > svg {
    width: 76%;
    height: 49px;
}

.app.open::after {
    content: "";
    position: absolute;
    bottom: -17px;
    left: calc(50% - 3px);
    width: 5px;
    height: 5px;
    border-radius: 50%;
    background: #050508;
}

.finder > svg { width: 82%; height: 62px; }
.launchpad > svg { width: 69%; height: 77px; margin-bottom: 2px; }
.chrome > svg { width: 86%; height: 84px; margin-bottom: 2px; }
.wechat > svg { width: 68%; height: 80px; margin-bottom: 2px; }
.terminal > svg { width: 87%; height: 70px; }
.phone > svg { width: 66%; height: 54px; }
.activity > svg { width: 90%; }
.obs > svg { width: 80%; height: 52px; margin-bottom: -4px; }
.file > svg { width: 63%; height: 54px; margin-bottom: -3px; }
.bin > svg { width: 66%; height: 55px; margin-bottom: -3px; }

.file span {
    position: absolute;
    bottom: -1px;
    color: #6c6d72;
    font-family: Inter, sans-serif;
    font-size: 8px;
    line-height: 10px;
}

.chrome > .cursor {
    position: absolute;
    top: 48px;
    left: 73%;
    width: 13px;
    height: 22px;
    margin: 0;
}

.line {
    justify-self: center;
    width: 1px;
    height: 56px;
    margin-bottom: -7px;
    background: #4c4d58;
}

.tip {
    position: absolute;
    bottom: calc(100% + 31px);
    padding: 5px 17px;
    border-radius: 4px;
    background: #9a9ba3;
    color: #26272e;
    font-family: Inter, "Noto Sans CJK SC", sans-serif;
    font-size: 18px;
    font-weight: normal;
    line-height: 21px;
    white-space: nowrap;
}

.tip::after {
    content: "";
    position: absolute;
    top: 100%;
    left: calc(50% - 10px);
    border: 10px solid transparent;
    border-top-color: #9a9ba3;
    border-bottom: 0;
}
```
